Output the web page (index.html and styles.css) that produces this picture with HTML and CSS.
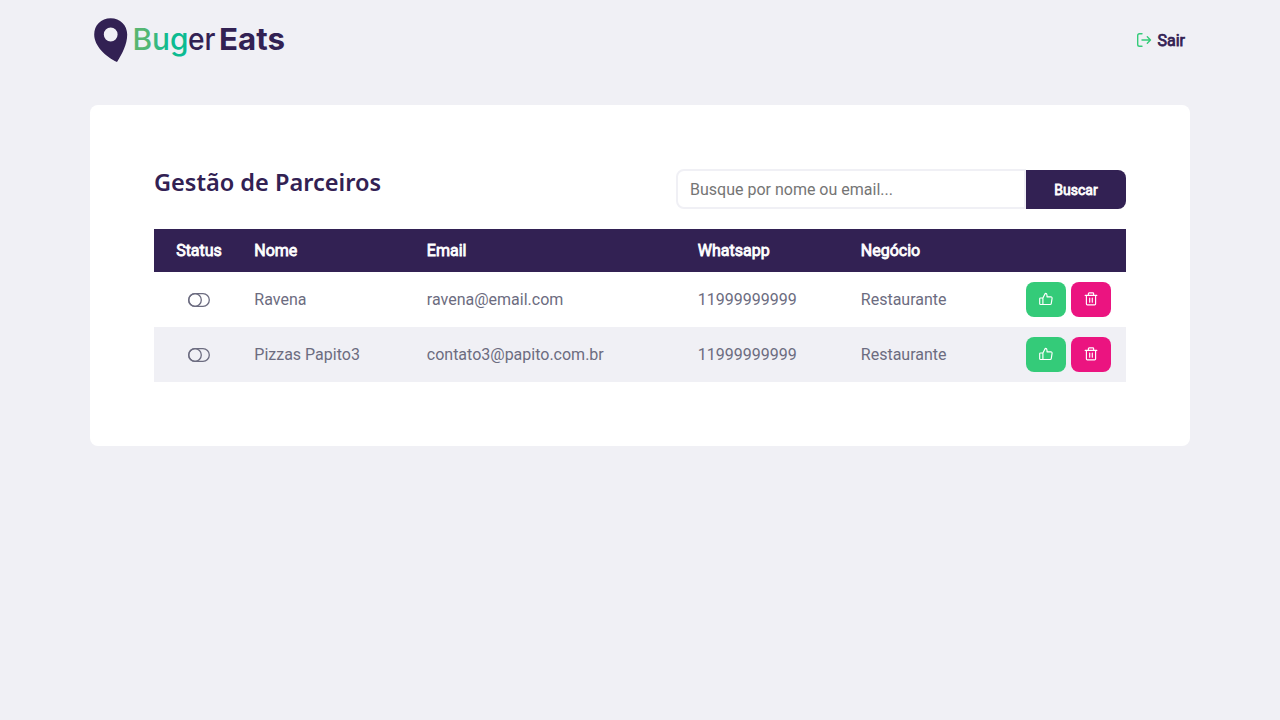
FILE: index.html
```html
<!DOCTYPE html>
<html lang="pt-BR">
<head>
<meta charset="utf-8">
<title>Buger Eats</title>
<link rel="stylesheet" href="styles.css">
</head>
<body>
<svg class="sprite" aria-hidden="true">
  <symbol id="toggle" viewBox="0 0 22 14"><rect x=".7" y=".7" width="20.6" height="12.6" rx="6.3"/><circle cx="7" cy="7" r="6.3"/></symbol>
  <symbol id="thumb" viewBox="0 0 14 14"><path d="M1.5 6h2.4v6.5H1.5a.8.8 0 0 1-.8-.8V6.8a.8.8 0 0 1 .8-.8zM3.9 6l2.300-4.600c1.100 0 1.800.8 1.800 1.800V4.800h3.900c.8 0 1.300.7 1.200 1.400l-.8 5.200c-.1.700-.6 1.100-1.200 1.100H3.900"/></symbol>
  <symbol id="trash" viewBox="0 0 14 14"><path d="M1.2 3.400h11.600M4.400 3.400V1.600c0-.4.3-.7.7-.7h3.800c.4 0 .7.3.7.7v1.800M2.400 3.400v8.600c0 .5.4.9.9.9h7.400c.5 0 .9-.4.9-.9V3.400M5.700 6v4.200M8.300 6v4.200"/></symbol>
</svg>
<div class="page">
  <header class="header">
    <svg class="logo" width="196" height="50" viewBox="0 0 196 50">
      <defs><linearGradient id="brand" gradientUnits="userSpaceOnUse" x1="43" y1="0" x2="98" y2="0"><stop offset="0" stop-color="#5bb570"/><stop offset=".3" stop-color="#4fb776"/><stop offset=".65" stop-color="#0cbb91"/><stop offset="1" stop-color="#0cbb91"/></linearGradient></defs>
      <path class="pin" fill-rule="evenodd" d="M20.7 3.3C11 3.3 4.2 10.5 4.2 19.5C4.2 31 15.5 41.5 27 47C32 39 37.2 29.5 37.2 19.5C37.2 10.5 30.2 3.3 20.7 3.3zM20.7 12.6a6.9 6.9 0 1 1 0 13.8a6.9 6.9 0 1 1 0-13.8z"/>
      <text class="word brand" x="42.5" y="34.8" textLength="56" lengthAdjust="spacingAndGlyphs">Bug</text>
      <text class="word" x="98" y="34.8" textLength="27.5" lengthAdjust="spacingAndGlyphs">er</text>
      <text class="word strong" x="129" y="34.8" textLength="66" lengthAdjust="spacingAndGlyphs">Eats</text>
    </svg>
    <a class="logout">
      <svg width="16" height="16" viewBox="0 0 16 16"><path d="M6 1.7H3.5C2.4 1.7 1.7 2.4 1.7 3.5v9c0 1.100.7 1.800 1.800 1.800H6M6 8h8.500M11.300 4.800L14.500 8l-3.200 3.200"/></svg>
      <span>Sair</span>
    </a>
  </header>
  <main class="card">
    <div class="toolbar">
      <h1 class="title"><svg width="230" height="36"><text x="0" y="27" textLength="227" lengthAdjust="spacingAndGlyphs">Gestão de Parceiros</text></svg></h1>
      <form class="search">
        <input class="field" placeholder="Busque por nome ou email...">
        <button class="submit" type="button">Buscar</button>
      </form>
    </div>
    <table class="partners">
      <colgroup><col class="c-status"><col class="c-name"><col class="c-email"><col class="c-phone"><col class="c-type"><col></colgroup>
      <thead><tr><th class="center">Status</th><th>Nome</th><th>Email</th><th>Whatsapp</th><th>Negócio</th><th></th></tr></thead>
      <tbody>
        <tr><td class="center"><svg class="toggle"><use href="#toggle"/></svg></td><td>Ravena</td><td>ravena@email.com</td><td>11999999999</td><td>Restaurante</td>
          <td><div class="actions"><button class="action approve"><svg><use href="#thumb"/></svg></button><button class="action remove"><svg><use href="#trash"/></svg></button></div></td></tr>
        <tr><td class="center"><svg class="toggle"><use href="#toggle"/></svg></td><td>Pizzas Papito3</td><td>contato3@papito.com.br</td><td>11999999999</td><td>Restaurante</td>
          <td><div class="actions"><button class="action approve"><svg><use href="#thumb"/></svg></button><button class="action remove"><svg><use href="#trash"/></svg></button></div></td></tr>
      </tbody>
    </table>
  </main>
</div>
</body>
</html>
```

FILE: styles.css
```css
* { box-sizing: border-box; margin: 0; padding: 0; }
body { background: #f0f0f5; color: #6c6c80; font: 16px Roboto, sans-serif; }
svg { fill: none; stroke-linecap: round; stroke-linejoin: round; }
.sprite { display: none; }
.page { width: 1100px; margin: 0 auto; }
.header { height: 105px; padding: 15px 5px 0 0; display: flex; justify-content: space-between; align-items: flex-start; }
.logo { display: block; overflow: visible; }
.pin { fill: #322153; }
.word { font: 550 30px Inter, sans-serif; fill: #322153; stroke: none; }
.brand { fill: url(#brand); }
.strong { font-weight: 650; }
.logout { display: flex; align-items: center; gap: 5px; height: 50px; color: #322153; -webkit-text-stroke: .75px #322153; }
.logout svg { stroke: #34cb79; stroke-width: 1.4; }
.card { height: 341px; padding: 64px; background: #fff; border-radius: 8px; }
.toolbar { height: 60px; display: flex; justify-content: space-between; align-items: flex-start; }
.title { height: 36px; line-height: 0; }
.title svg { overflow: visible; margin-top: -5px; }
.title text { font: 650 24px "Noto Sans", sans-serif; fill: #322153; }
.search { display: flex; height: 40px; }
.field { width: 350px; height: 40px; padding: 0 12px; border: 2px solid #f0f0f5; border-radius: 8px 0 0 8px; font: 16px Roboto, sans-serif; }
.field::placeholder { color: #757575; }
.submit { width: 100px; height: 39px; margin-top: 1px; border: 0; border-radius: 0 8px 8px 0; background: #322153; color: #fff; font: 14px Roboto, sans-serif; -webkit-text-stroke: .8px #fff; }
.partners { width: 972px; table-layout: fixed; border-collapse: collapse; }
.c-status { width: 90px; }
.c-name { width: 172.5px; }
.c-email { width: 271px; }
.c-phone { width: 163px; }
.c-type { width: 150px; }
.partners th { height: 43px; padding: 0 10px 0 10.3px; background: #322153; color: #fff; text-align: left; font-weight: 400; -webkit-text-stroke: .8px #fff; }
.partners td { height: 55px; padding: 0 10px 0 10.3px; }
.partners .center { padding: 0 10px; text-align: center; }
.partners tbody tr:nth-child(even) { background: #f0f0f5; }
.toggle { display: block; width: 22px; height: 14px; margin: 1px auto 0; stroke: #6c6c80; stroke-width: 1.3; }
.actions { display: flex; justify-content: flex-end; gap: 5px; margin-right: 5px; }
.action { width: 40px; height: 35px; border: 0; border-radius: 8px; display: flex; align-items: center; justify-content: center; }
.action svg { width: 14px; height: 14px; margin-bottom: 1px; stroke: #fff; stroke-width: 1.15; }
.approve { background: #34cb79; }
.remove { background: #eb1480; }
```
